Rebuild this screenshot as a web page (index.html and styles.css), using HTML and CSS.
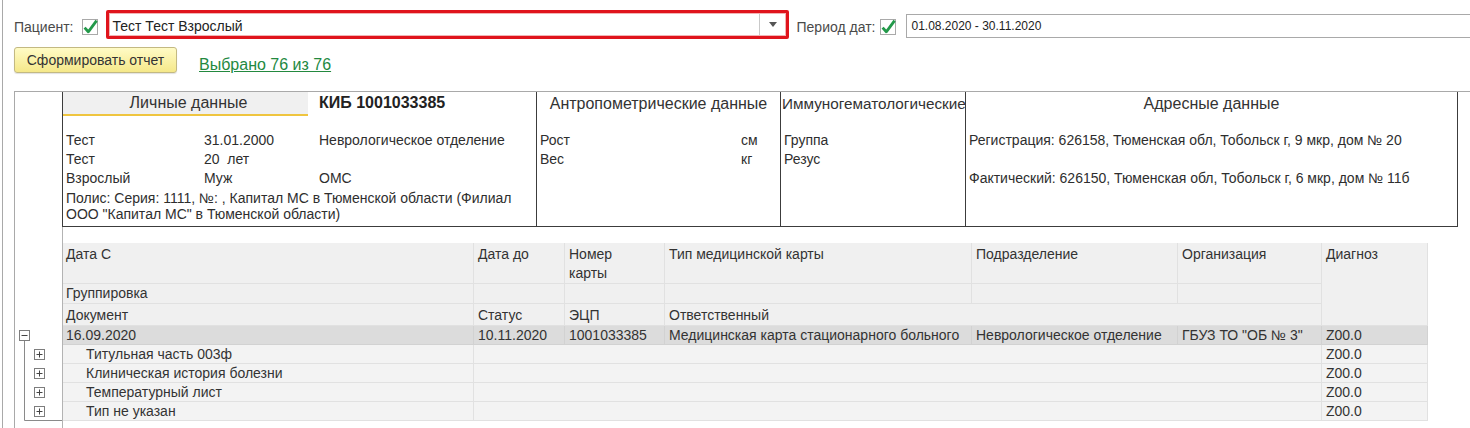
FILE: index.html
```html
<!DOCTYPE html>
<html lang="ru">
<head>
<meta charset="utf-8">
<title>Отчет</title>
<link rel="stylesheet" href="styles.css">
</head>
<body>
<div class="window">
  <div class="bar-top">
    <span class="label">Пациент:</span>
    <span class="check">
      <svg width="16" height="16" viewBox="0 0 16 16"><rect x="0.5" y="0.5" width="15" height="15" fill="#fff" stroke="#a9a9a9"/><path d="M2.6 8.6 L6.3 12.8 L14.6 1.6" fill="none" stroke="#23994a" stroke-width="2.8" stroke-linejoin="round"/></svg>
    </span>
    <div class="combo">
      <span class="combo-text">Тест Тест Взрослый</span>
      <span class="combo-btn"><svg width="8" height="5" viewBox="0 0 8 5"><polygon points="0,0 8,0 4,5" fill="#555"/></svg></span>
    </div>
    <span class="label label-period">Период дат:</span>
    <span class="check check-period">
      <svg width="16" height="16" viewBox="0 0 16 16"><rect x="0.5" y="0.5" width="15" height="15" fill="#fff" stroke="#a9a9a9"/><path d="M2.6 8.6 L6.3 12.8 L14.6 1.6" fill="none" stroke="#23994a" stroke-width="2.8" stroke-linejoin="round"/></svg>
    </span>
    <div class="date-input">01.08.2020 - 30.11.2020</div>
  </div>

  <div class="bar-actions">
    <button class="btn" type="button">Сформировать отчет</button>
    <a class="link" href="#">Выбрано 76 из 76</a>
  </div>

  <div class="sheet">
    <div class="rail"></div>

    <div class="cards">
      <div class="card card-personal">
        <div class="tabs">
          <div class="tab">Личные данные</div>
          <div class="kib">КИБ 1001033385</div>
        </div>
        <div class="pbody">
          <span>Тест</span><span>31.01.2000</span><span>Неврологическое отделение</span>
          <span>Тест</span><span>20&nbsp; лет</span><span></span>
          <span>Взрослый</span><span>Муж</span><span>ОМС</span>
          <span class="policy">Полис: Серия: 1111, №: , Капитал МС в Тюменской области (Филиал<br>ООО "Капитал МС" в Тюменской области)</span>
        </div>
      </div>
      <div class="card card-anthro">
        <div class="card-title">Антропометрические данные</div>
        <div class="abody">
          <span>Рост</span><span>см</span>
          <span>Вес</span><span>кг</span>
        </div>
      </div>
      <div class="card card-immuno">
        <div class="card-title title-left">Иммуногематологические</div>
        <div class="ibody">
          <div>Группа</div>
          <div>Резус</div>
        </div>
      </div>
      <div class="card card-address">
        <div class="card-title">Адресные данные</div>
        <div class="adbody">
          <div>Регистрация: 626158, Тюменская обл, Тобольск г, 9 мкр, дом № 20</div>
          <div class="ad-second">Фактический: 626150, Тюменская обл, Тобольск г, 6 мкр, дом № 11б</div>
        </div>
      </div>
    </div>

    <!-- header row 1 -->
    <div class="th r1 c2">Дата С</div>
    <div class="th r1 c3">Дата до</div>
    <div class="th r1 c4">Номер<br>карты</div>
    <div class="th r1 c5">Тип медицинской карты</div>
    <div class="th r1 c6">Подразделение</div>
    <div class="th r1 c7">Организация</div>
    <div class="th diag">Диагноз</div>
    <!-- header row 2 -->
    <div class="th r2 c2">Группировка</div>
    <div class="th r2 c3"></div>
    <div class="th r2 c4"></div>
    <div class="th r2 c5"></div>
    <div class="th r2 c6"></div>
    <div class="th r2 c7"></div>
    <!-- header row 3 -->
    <div class="th r3 c2">Документ</div>
    <div class="th r3 c3">Статус</div>
    <div class="th r3 c4">ЭЦП</div>
    <div class="th r3 c5to8">Ответственный</div>

    <!-- data row -->
    <div class="td main d1 c2">16.09.2020</div>
    <div class="td main d1 c3">10.11.2020</div>
    <div class="td main d1 c4">1001033385</div>
    <div class="td main d1 c5">Медицинская карта стационарного больного</div>
    <div class="td main d1 c6">Неврологическое отделение</div>
    <div class="td main d1 c7">ГБУЗ ТО "ОБ № 3"</div>
    <div class="td main d1 c8">Z00.0</div>

    <div class="td d2 c2 child">Титульная часть 003ф</div>
    <div class="td d2 c3to8"></div>
    <div class="td d2 c8">Z00.0</div>

    <div class="td d3 c2 child">Клиническая история болезни</div>
    <div class="td d3 c3to8"></div>
    <div class="td d3 c8">Z00.0</div>

    <div class="td d4 c2 child">Температурный лист</div>
    <div class="td d4 c3to8"></div>
    <div class="td d4 c8">Z00.0</div>

    <div class="td d5 c2 child">Тип не указан</div>
    <div class="td d5 c3to8"></div>
    <div class="td d5 c8">Z00.0</div>

    <svg class="tree" width="47" height="95" viewBox="0 0 47 95">
      <g fill="none" stroke="#8a8a8a" stroke-width="1">
        <path d="M9.5 14.5 V94.5 H47"/>
        <rect x="4.5" y="4.5" width="10" height="10" fill="#fff" stroke="#7d7d7d"/>
        <path d="M6.5 9.5 H12.5" stroke="#444"/>
        <rect x="19.5" y="23.5" width="10" height="10" fill="#fff" stroke="#7d7d7d"/>
        <path d="M21.5 28.5 H27.5 M24.5 25.5 V31.5" stroke="#444"/>
        <rect x="19.5" y="42.5" width="10" height="10" fill="#fff" stroke="#7d7d7d"/>
        <path d="M21.5 47.5 H27.5 M24.5 44.5 V50.5" stroke="#444"/>
        <rect x="19.5" y="61.5" width="10" height="10" fill="#fff" stroke="#7d7d7d"/>
        <path d="M21.5 66.5 H27.5 M24.5 63.5 V69.5" stroke="#444"/>
        <rect x="19.5" y="80.5" width="10" height="10" fill="#fff" stroke="#7d7d7d"/>
        <path d="M21.5 85.5 H27.5 M24.5 82.5 V88.5" stroke="#444"/>
      </g>
    </svg>
  </div>
</div>
</body>
</html>
```
FILE: styles.css
```css
* { box-sizing: border-box; }

html, body {
  margin: 0;
  padding: 0;
  background: #fff;
  overflow: hidden;
}

body {
  font-family: "Liberation Sans", Arial, sans-serif;
  font-size: 14px;
  color: #333;
  width: 1470px;
  height: 428px;
}

.window {
  margin-left: 2px;
  border-left: 1px solid #a9a9a9;
  height: 428px;
}

/* ---------- top bar ---------- */
.bar-top {
  display: flex;
  align-items: flex-start;
  padding-top: 10px;
  padding-left: 11px;
  height: 39px;
}

.label {
  color: #4a4a4a;
  line-height: 16px;
  margin-top: 9px;
  white-space: nowrap;
}

.label-period {
  margin-left: 8px;
}

.check {
  display: block;
  width: 16px;
  height: 16px;
  margin-top: 9px;
  margin-left: 8px;
}

.check svg { display: block; }

.check-period { margin-left: 5px; }

.combo {
  display: flex;
  width: 683px;
  height: 29px;
  margin-left: 8px;
  border: 3px solid #e0141c;
  border-radius: 2px;
  box-shadow: inset 0 0 0 1px #f2b4b4;
  background: #fff;
}

.combo-text {
  flex: 1;
  padding: 4px 0 0 4px;
  line-height: 19px;
  color: #222;
}

.combo-btn {
  width: 27px;
  margin: 1px 0;
  border-left: 1px solid #c9c9c9;
  display: flex;
  align-items: center;
  justify-content: center;
}

.combo-btn svg { display: block; }

.date-input {
  flex: 1;
  margin-left: 10px;
  margin-top: 4px;
  height: 24px;
  border: 1px solid #a9a9a9;
  border-right: none;
  padding-left: 4px;
  font-size: 12px;
  line-height: 22px;
  color: #222;
}

/* ---------- actions ---------- */
.bar-actions {
  display: flex;
  align-items: flex-start;
  padding-top: 8px;
  padding-left: 11px;
  height: 34px;
}

.btn {
  width: 163px;
  height: 26px;
  padding: 0;
  border: 1px solid #c3b982;
  border-radius: 3px;
  background: linear-gradient(#fffbc6, #f5e88a);
  box-shadow: 0 1px 1px rgba(0, 0, 0, 0.12);
  font-family: inherit;
  font-size: 14px;
  color: #333;
  line-height: 24px;
}

.link {
  margin-left: 22px;
  margin-top: 9px;
  font-size: 16px;
  line-height: 18px;
  color: #23893f;
  text-decoration: underline;
}

/* ---------- spreadsheet ---------- */
.sheet {
  margin-top: 18px;
  margin-left: 11px;
  height: 337px;
  border-top: 1px solid #a9a9a9;
  border-left: 1px solid #a9a9a9;
  display: grid;
  grid-template-columns: 47px 412px 91px 100px 307px 206px 144px 106px 1fr;
  grid-template-rows: 135px 16px 41px 20px 22px 19px 19px 19px 19px 19px 1fr;
}

.rail {
  grid-column: 2;
  grid-row: 2 / -1;
  border-left: 1px solid #b3b3b3;
  position: relative;
  z-index: 2;
}

.cards {
  grid-column: 2 / -1;
  grid-row: 1;
  display: flex;
}

.card {
  height: 135px;
  border-left: 1px solid #3c3c3c;
  border-bottom: 1px solid #3c3c3c;
  color: #2e2e2e;
  overflow: hidden;
}

.card-personal { width: 474px; }
.card-anthro { width: 244px; }
.card-immuno { width: 185px; }
.card-address { width: 493px; border-right: 1px solid #3c3c3c; }

.tabs {
  display: flex;
  height: 24px;
}

.tab {
  width: 245px;
  padding-left: 6px;
  background: #f0f0f0;
  border-bottom: 2px solid #efc53f;
  text-align: center;
  font-size: 16px;
  line-height: 22px;
  color: #333;
}

.kib {
  margin-left: 11px;
  font-weight: bold;
  font-size: 16px;
  line-height: 22px;
  color: #222;
}

.pbody {
  display: grid;
  grid-template-columns: 138px 115px 1fr;
  margin-top: 15px;
  padding-left: 3px;
  line-height: 19px;
}

.policy {
  grid-column: 1 / -1;
  line-height: 16px;
  padding-top: 2px;
}

.card-title {
  height: 23px;
  line-height: 23px;
  font-size: 16px;
  text-align: center;
  white-space: nowrap;
  color: #333;
}

.title-left {
  text-align: left;
  padding-left: 1px;
  font-size: 15.3px;
  overflow: hidden;
}

.abody {
  display: grid;
  grid-template-columns: 201px 1fr;
  margin-top: 16px;
  padding-left: 3px;
  line-height: 19px;
}

.ibody {
  margin-top: 16px;
  padding-left: 3px;
  line-height: 19px;
}

.adbody {
  margin-top: 16px;
  padding-left: 3px;
  line-height: 19px;
  white-space: nowrap;
}

.ad-second { margin-top: 19px; }

/* ---------- table ---------- */
.th, .td {
  border-right: 1px solid #e1e1e1;
  border-bottom: 1px solid #e1e1e1;
  padding-left: 4px;
  line-height: 19px;
  color: #333;
  white-space: nowrap;
  overflow: hidden;
}

.th { background: #f0f0f0; }

.r1 { grid-row: 3; padding-top: 2px; }
.r2 { grid-row: 4; }
.r3 { grid-row: 5; padding-top: 2px; }

.c2 { grid-column: 2; }
.c3 { grid-column: 3; }
.c4 { grid-column: 4; }
.c5 { grid-column: 5; }
.c6 { grid-column: 6; }
.c7 { grid-column: 7; }
.c8 { grid-column: 8; }
.c5to8 { grid-column: 5 / 8; }
.c3to8 { grid-column: 3 / 8; }

.diag {
  grid-column: 8;
  grid-row: 3 / 6;
  padding-top: 2px;
}

.td {
  background: #f3f3f3;
  line-height: 18px;
}

.td.main { background: #dcdcdc; border-color: #d2d2d2; }

.d1 { grid-row: 6; }
.d2 { grid-row: 7; }
.d3 { grid-row: 8; }
.d4 { grid-row: 9; }
.d5 { grid-row: 10; }

.child { padding-left: 24px; }

.tree {
  grid-column: 1;
  grid-row: 6 / 11;
  display: block;
}
```
